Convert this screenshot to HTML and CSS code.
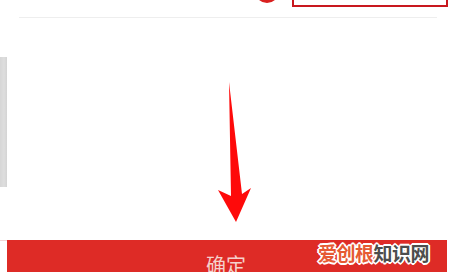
FILE: index.html
```html
<!DOCTYPE html>
<html lang="zh">
<head>
<meta charset="utf-8">
<link rel="stylesheet" href="styles.css">
</head>
<body>
<div class="page">
  <div class="top">
    <span class="ring"></span>
    <span class="box"></span>
  </div>
  <div class="rule"></div>
  <div class="main">
    <div class="strip"><div class="strip-inner"></div></div>
    <div class="arrow-area">
      <svg class="arrow" width="447" height="222" viewBox="7 18 447 222">
        <path d="M229,82 L242,194 L251,188 L236,222 L218,190 L231,196 Z" fill="#fe0a0a"/>
      </svg>
    </div>
  </div>
  <div class="btn-row">
    <div class="btn-edge"></div>
    <div class="btn">确定</div>
  </div>
  <div class="watermark"><span class="wm-a">爱创根</span><span class="wm-b">知识网</span></div>
</div>
</body>
</html>
```
FILE: styles.css
```css
html, body {
  margin: 0;
  padding: 0;
  background: #ffffff;
  overflow: hidden;
}
body {
  width: 454px;
  height: 272px;
  font-family: "Noto Sans CJK SC", "Noto Sans", sans-serif;
}
.page {
  position: relative;
  width: 454px;
  height: 272px;
  overflow: hidden;
}
.top {
  height: 7px;
  display: flex;
  align-items: flex-end;
  padding-left: 255px;
}
.ring {
  width: 18px;
  height: 18px;
  border: 3px solid #d9201f;
  border-radius: 50%;
  margin-bottom: 4px;
  flex: none;
}
.box {
  width: 152px;
  height: 30px;
  border: 2px solid #c8181e;
  margin-left: 13px;
  flex: none;
  box-sizing: content-box;
}
.rule {
  margin: 10px 17px 0 19px;
  height: 1px;
  background: #eeeeee;
}
.main {
  height: 222px;
  display: flex;
}
.strip {
  width: 7px;
  flex: none;
}
.strip-inner {
  margin-top: 39px;
  height: 130px;
  background: linear-gradient(90deg, #d6d6d6 0, #dedede 4px, #d4d4d4 7px);
}
.arrow-area {
  flex: 1;
}
.arrow {
  display: block;
}
.btn-row {
  display: flex;
  height: 32px;
}
.btn-edge {
  width: 7px;
  flex: none;
  border-top: 1px solid #f3d6d6;
}
.btn {
  width: 440px;
  flex: none;
  background: #de2b26;
  color: #f5d0cb;
  font-size: 20px;
  line-height: 20px;
  padding-top: 15px;
  box-sizing: border-box;
  text-align: center;
  overflow: hidden;
  padding-right: 2px;
}
.watermark {
  position: absolute;
  left: 318px;
  top: 240px;
  font-size: 19px;
  line-height: 26px;
  font-weight: 700;
  letter-spacing: -0.5px;
  text-shadow:
    1px 0 0 #fff, -1px 0 0 #fff, 0 1px 0 #fff, 0 -1px 0 #fff,
    1px 1px 0 #fff, -1px -1px 0 #fff, 1px -1px 0 #fff, -1px 1px 0 #fff,
    2px 0 0 #fff, -2px 0 0 #fff, 0 2px 0 #fff, 0 -2px 0 #fff;
}
.wm-a {
  color: #e65a33;
}
.wm-b {
  color: #4d4d4d;
}
```
